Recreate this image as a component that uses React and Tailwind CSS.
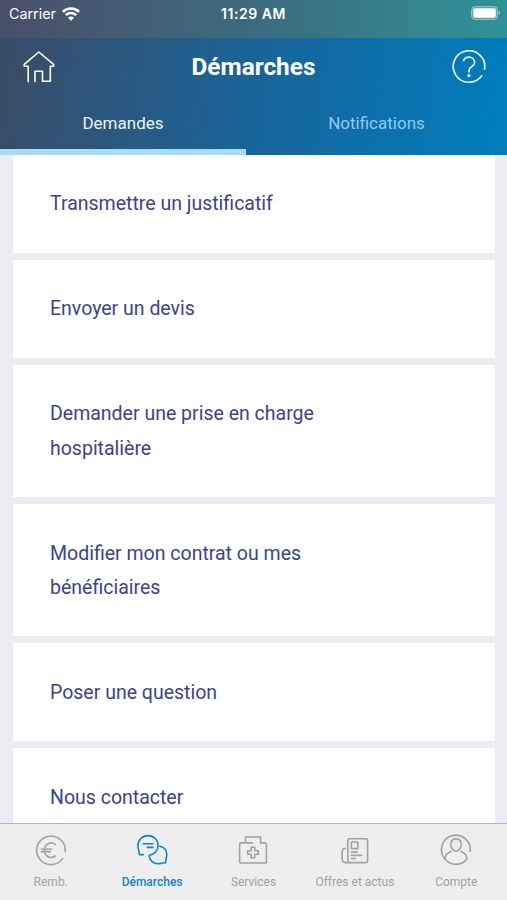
import { useState } from 'react';

const HomeIcon = () => (
    <svg width="32" height="32" viewBox="0 0 32 32" fill="none" stroke="currentColor" strokeWidth="1.6" strokeLinejoin="round" strokeLinecap="round">
        <path d="M5.2 30.6V15.3H1.2V13.4L15.8 1L30.6 13.4V15.3H27.3V30.2H19.5V20.3H12V30.6" />
    </svg>
);

const HelpIcon = () => (
    <svg width="34" height="34" viewBox="0 0 34 34" fill="none" stroke="#e2f6ff" strokeWidth="1.7" strokeLinecap="round">
        <path d="M32.6 19A15.8 15.8 0 1 0 29.6 26" />
        <path d="M11.6 10.6C12.4 8.4 14.4 7.2 16.8 7.2C20 7.2 22.6 9.2 22.6 12.4C22.6 16.6 16.9 16.4 16.9 20.8V21.8" />
        <circle cx="16.9" cy="25.6" r="0.8" fill="#e2f6ff" />
    </svg>
);

const WifiIcon = () => (
    <svg width="18" height="14" viewBox="0 0 18 14" fill="none" stroke="currentColor" strokeWidth="2.5">
        <path d="M0.9 4.9C5.3 0.4 12.7 0.4 17.1 4.9" />
        <path d="M3.8 8.2C6.7 5.4 11.3 5.4 14.2 8.2" />
        <path d="M9 13.8L6 10.8C7.7 9.2 10.3 9.2 12 10.8Z" fill="currentColor" stroke="none" />
    </svg>
);

const BatteryIcon = () => (
    <svg width="31" height="14" viewBox="0 0 31 14">
        <rect x="0.6" y="0.6" width="25.8" height="12.8" rx="3.6" fill="white" fillOpacity="0.15" stroke="white" strokeOpacity="0.45" />
        <rect x="2.2" y="2.3" width="22.6" height="9.4" rx="1.6" fill="white" />
        <path d="M27.6 4.8C29.6 5.6 29.6 8.4 27.6 9.2Z" fill="white" fillOpacity="0.5" />
    </svg>
);

const NavIcon = ({ children }) => (
    <svg width="32" height="32" viewBox="0 0 32 32" fill="none" stroke="currentColor" strokeWidth="1.6" strokeLinecap="round" strokeLinejoin="round">
        {children}
    </svg>
);

const EuroIcon = () => (
    <NavIcon>
        <path d="M30.2 17.6A14.3 14.3 0 1 0 27.6 24.6" />
        <path d="M20.2 10.4C15.4 7 9.6 10 9.6 16.2C9.6 22.4 15.4 25.4 20.2 22" />
        <path d="M6.4 15H16.4M6.4 17.6H15.4" />
    </NavIcon>
);

const ChatIcon = () => (
    <NavIcon>
        <path d="M7.4 20.6H3.3C3.6 17.4 2 15.4 1.9 12C1.9 6 6.3 1.6 12 1.6C17.8 1.6 22.1 6 22.1 11.4C22.1 16.6 18.4 20.4 13.2 21.2C13.2 26.2 17.2 29.8 22.2 29.8C25 29.8 26.6 28.7 29.6 28.8C29.3 26 30.8 24 30.8 20.6C30.8 16.2 27.8 13 23.8 12.2" />
        <path d="M7.2 9.8H17M11.2 13.4H17" />
    </NavIcon>
);

const ServicesIcon = () => (
    <NavIcon>
        <path d="M15.4 8.9H4.4Q2.6 8.9 2.6 10.7V27.2Q2.6 29 4.4 29H27.6Q29.4 29 29.4 27.2V10.7Q29.4 8.9 27.6 8.9H23.6V3H8.6V8.9" />
        <path d="M14.2 13.2H17.8V16.7H21.4V20.3H17.8V23.8H14.2V20.3H10.6V16.7H14.2Z" />
    </NavIcon>
);

const NewsIcon = () => (
    <NavIcon>
        <rect x="8.8" y="4.8" width="19.8" height="23.8" rx="1.6" />
        <path d="M6 14.5C4 14.5 3.2 15.3 3.2 17.5V25.1C3.2 27.5 4.2 28.6 6.6 28.6H11" />
        <rect x="12.4" y="8" width="6.4" height="6.6" />
        <path d="M12.4 18.1H18M12.4 21.4H22.6M12.4 24.5H16.6" />
    </NavIcon>
);

const AccountIcon = () => (
    <NavIcon>
        <path d="M30.2 17.4A14.4 14.4 0 1 0 5.2 25.2C8 28.6 11.8 30.2 16 30.2C20.6 30.2 24.4 28.4 26.8 25" />
        <path d="M16 4.9C12.8 4.9 10.8 7.2 10.8 10.4C10.8 13.8 13 17 16 17C19 17 21.2 13.8 21.2 10.4C21.2 7.2 19.2 4.9 16 4.9Z" />
        <path d="M4.9 25C5 20.8 7.4 18.7 11 17.4M21 17.4C24.8 18.7 27 20.8 26.8 25" />
    </NavIcon>
);

const requests = [
    'Transmettre un justificatif',
    'Envoyer un devis',
    'Demander une prise en charge hospitalière',
    'Modifier mon contrat ou mes bénéficiaires',
    'Poser une question',
    'Nous contacter',
];

const navItems = [
    { label: 'Remb.', Icon: EuroIcon },
    { label: 'Démarches', Icon: ChatIcon, active: true },
    { label: 'Services', Icon: ServicesIcon },
    { label: 'Offres et actus', Icon: NewsIcon },
    { label: 'Compte', Icon: AccountIcon },
];

const StatusBar = () => (
    <div className="grid h-[38px] grid-cols-3 items-start bg-linear-to-r from-[#48506a] via-[#3b6b7d] to-[#2e9299] pt-1 font-['Inter','Liberation_Sans',sans-serif] text-white">
        <div className="flex items-center gap-1.5 pl-[9px] text-[14.3px] leading-5">
            <span>Carrier</span>
            <WifiIcon />
        </div>
        <span className="text-center text-[14px] font-semibold leading-5 tracking-[0.55px]">11:29 AM</span>
        <div className="flex justify-end pt-0.5 pr-[5px]">
            <BatteryIcon />
        </div>
    </div>
);

const tabs = ['Demandes', 'Notifications'];

const Header = () => {
    const [tab, setTab] = useState(0);

    return (
        <header className="shrink-0">
            <StatusBar />
            <div className="bg-linear-[97deg] from-[#394d68] from-2% via-[#19649a] via-50% to-[#007dbc] to-98%">
                <div className="flex h-[58px] items-center justify-between pl-[23px] pr-[21px] text-white">
                    <button><HomeIcon /></button>
                    <h1 className="text-[24.4px] font-bold">Démarches</h1>
                    <button><HelpIcon /></button>
                </div>
                <div className="flex h-[59px]">
                    {tabs.map((label, i) => (
                        <button
                            key={label}
                            onClick={() => setTab(i)}
                            className={`flex justify-center border-b-6 pt-[14px] text-[17px] leading-[26px] ${i === 0 ? 'w-[246px]' : 'flex-1'} ${tab === i ? 'border-[#a5dcf6] text-[#e8f4fc]' : 'border-transparent text-[#8ccdf0]'}`}
                        >
                            {label}
                        </button>
                    ))}
                </div>
            </div>
        </header>
    );
};

const App = () => (
    <div className="flex h-screen flex-col overflow-hidden bg-[#ececf4] font-['Roboto','Liberation_Sans',sans-serif]">
        <Header />

        <main className="flex min-h-0 flex-1 flex-col gap-[7.4px] overflow-hidden pl-[13px] pr-3">
            {requests.map(label => (
                <button key={label} className="shrink-0 bg-white px-[37px] pt-[32.4px] pb-[30.9px] text-left text-[19.5px] leading-[34.3px] text-[#3c4294]">
                    <span className="block max-w-[300px]">{label}</span>
                </button>
            ))}
        </main>

        <nav className="grid h-[77px] shrink-0 grid-cols-5 border-t border-[#b4b4b6] bg-[#eeeeee]">
            {navItems.map(({ label, Icon, active }) => (
                <button key={label} className={`flex flex-col items-center pt-[10px] ${active ? 'text-[#1684c4]' : 'text-[#a2a2a2]'}`}>
                    <Icon />
                    <span className={`mt-2 whitespace-nowrap text-[12px] leading-4 ${active ? 'font-medium' : ''}`}>{label}</span>
                </button>
            ))}
        </nav>
    </div>
);

export default App;
